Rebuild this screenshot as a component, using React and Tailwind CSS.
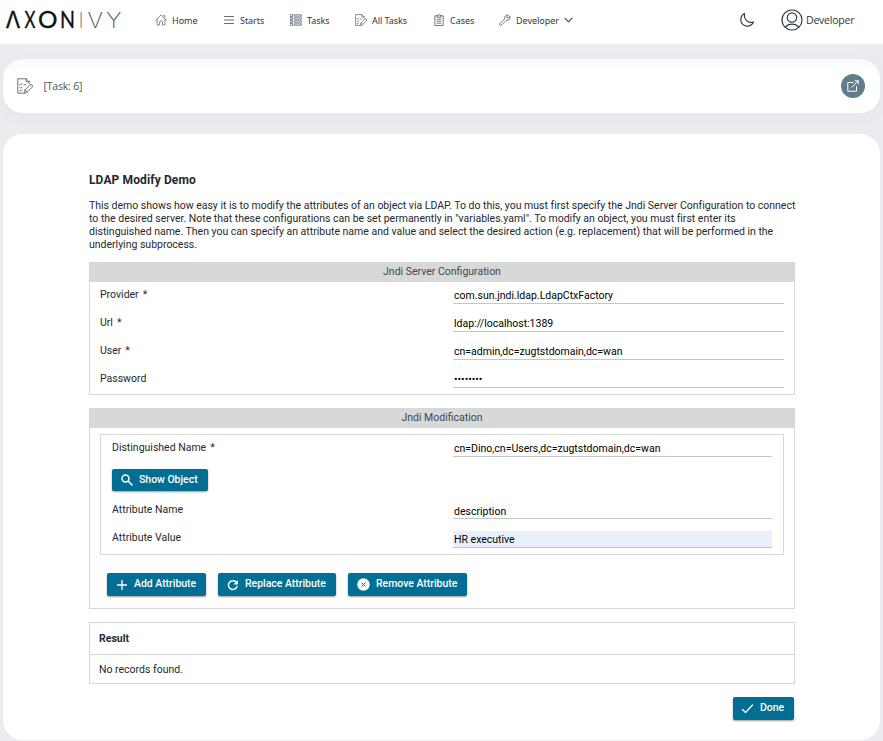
const stroke = { fill: 'none', stroke: 'currentColor', strokeLinecap: 'round', strokeLinejoin: 'round' };

function Logo() {
  return (
    <svg className="block h-[44px] w-[130px] shrink-0" viewBox="0 0 130 44" fill="#111" fontFamily="Lato, 'Open Sans', sans-serif" fontSize="22.4">
      <g stroke="#111" strokeWidth="0.3">
        <text x="5.500" y="28" textLength="15" lengthAdjust="spacingAndGlyphs" fontFamily="Inter, sans-serif">Λ</text>
        <text x="24.5" y="28" textLength="11" lengthAdjust="spacingAndGlyphs">X</text>
        <text x="38" y="28" textLength="19.500" lengthAdjust="spacingAndGlyphs">O</text>
        <text x="60" y="28" textLength="15" lengthAdjust="spacingAndGlyphs">N</text>
      </g>
      <g fontFamily="Inter, sans-serif" fontWeight="200" fontSize="22" fill="#555">
        <text x="78.300" y="28" fill="#777">I</text>
        <text x="87.500" y="28" textLength="15.500" lengthAdjust="spacingAndGlyphs">V</text>
        <text x="106" y="28" textLength="15.500" lengthAdjust="spacingAndGlyphs">Y</text>
      </g>
    </svg>
  );
}

function HomeIcon() {
  return (
    <svg className="size-[12px]" viewBox="0 0 12 12" strokeWidth="0.7" {...stroke}>
      <path d="M.6 6.300 6 .9l5.400 5.400M2.100 5.300v5.700h2.500V8.300a1.400 1.400 0 0 1 2.800 0V11h2.500V5.300M8.500 1.600h1.400v1.600" />
    </svg>
  );
}
function MenuIcon() {
  return (
    <svg className="size-[12px]" viewBox="0 0 12 12" strokeWidth="0.9" {...stroke}>
      <path d="M1.500 2.500h9M1.500 6h9M1.500 9.500h9" />
    </svg>
  );
}
function ListIcon() {
  return (
    <svg className="size-[12px]" viewBox="0 0 12 12" strokeWidth="0.7" {...stroke}>
      <path d="M.5.5h2v2h-2zM.5 3.500h2v2h-2zM.5 6.500h2v2h-2zM.5 9.500h2v2h-2zM4.500.8h7v1.400h-7zM4.500 3.800h7v1.400h-7zM4.500 6.800h7v1.400h-7zM4.500 9.800h7v1.400h-7z" />
    </svg>
  );
}
function TaskIcon({ className }) {
  return (
    <svg className={className} viewBox="0 0 16 16" strokeWidth="0.900" {...stroke}>
      <path d="M6.500 15.200H.8V.8h8.400l3 3v2M9.200.8v3h3M2.800 6.200l.8.8 1.300-1.600M2.800 9.500l.8.8 1.300-1.600M2.800 12.600l.8.8 1.300-1.600M7 6.700h1.500" />
      <path d="m7.200 15 .8-3 5-4.800a1.300 1.300 0 0 1 2.200 2L10.200 14zM8 12l2.200 2" />
    </svg>
  );
}
function ClipboardIcon() {
  return (
    <svg className="size-[12px]" viewBox="0 0 12 12" strokeWidth="0.8" {...stroke}>
      <path d="M4 1.800H1.800v9.700h8.400V1.800H8M4 2.800V1.500h1a1 1 0 0 1 2 0h1v1.300zM4 5.200h4M4 7.200h4M4 9.200h4" />
    </svg>
  );
}
function WrenchIcon() {
  return (
    <svg className="size-[12px]" viewBox="0 0 12 12" strokeWidth="0.8" {...stroke}>
      <path d="M10.900 2.400 9.200 4 7.900 3.900 7.800 2.700 9.400 1A3 3 0 0 0 5.800 4.900L.9 9.500a1.100 1.100 0 0 0 1.600 1.600L7.200 6.300a3 3 0 0 0 3.700-3.900z" />
    </svg>
  );
}

function NavItem({ icon, label, className }) {
  return (
    <a className={`flex h-full items-center text-[#4f5b66] ${className}`}>
      {icon}
      <span className="ml-[5px] mt-[1px] whitespace-nowrap tracking-[-0.04px] text-[#30363d]">{label}</span>
    </a>
  );
}

function Row({ label, value, required = false, inputClass = 'mt-[5px]', valueClass = 'w-[331px]', labelWidth = 'w-[353px]' }) {
  return (
    <div className="flex h-[28px] items-start">
      <label className={`mt-[6px] leading-[14px] ${labelWidth}`}>
        {label}
        {required && <span className="ml-[4px]">*</span>}
      </label>
      <div className={`h-[17px] border-b border-[#c6c6c6] pl-px leading-[17px] text-black ${valueClass} ${inputClass}`}>{value}</div>
    </div>
  );
}

function Button({ icon, label, className, labelClass = '-mt-[2px]' }) {
  return (
    <button className={`flex items-center rounded-[2px] bg-[#006f93] font-medium text-white shadow-[0_1px_2px_rgba(0,0,0,0.4)] ${className}`}>
      {icon}
      <span className={`ml-[6px] whitespace-nowrap tracking-[-0.03px] ${labelClass}`}>{label}</span>
    </button>
  );
}

function Panel({ title, children, className }) {
  return (
    <section className={`border border-t-0 border-[#d7d9d8] ${className}`}>
      <h2 className="-mx-px h-[20px] bg-[#d7d9d8] text-center leading-[19px] text-[#40474d]">{title}</h2>
      {children}
    </section>
  );
}

export default function App() {
  return (
    <div className="flex h-[741px] w-[883px] flex-col overflow-hidden bg-[#eaecf0] font-[Roboto,sans-serif] text-[10.500px] text-[#24292e]">
      <header className="flex h-[44px] shrink-0 items-center bg-white pb-[4px] font-['Noto_Sans',sans-serif] text-[9px]">
        <div className="mt-[4px]"><Logo /></div>
        <nav className="flex h-full items-center">
          <NavItem className="ml-[25px] w-[68px]" icon={<HomeIcon />} label="Home" />
          <NavItem className="w-[67px]" icon={<MenuIcon />} label="Starts" />
          <NavItem className="w-[65px]" icon={<ListIcon />} label="Tasks" />
          <NavItem className="w-[78px]" icon={<TaskIcon className="size-[12px]" />} label="All Tasks" />
          <NavItem className="w-[66px]" icon={<ClipboardIcon />} label="Cases" />
          <NavItem className="w-[65px]" icon={<WrenchIcon />} label="Developer" />
          <svg className="h-[6px] w-[9px]" viewBox="0 0 10 6" strokeWidth="1.200" color="#3b444c" {...stroke}><path d="m1 1 4 4 4-4" /></svg>
        </nav>
        <svg className="ml-[166px] size-[16px]" viewBox="0 0 16 16" strokeWidth="1.1" color="#2f3c48" {...stroke}>
          <path d="M5.500 1.600A6.600 6.600 0 1 0 14.500 10 C10.500 11.500 4.500 8.500 5.500 1.600z" />
        </svg>
        <svg className="ml-[26px] size-[22px]" viewBox="0 0 22 22" strokeWidth="1.200" color="#2f3c48" {...stroke}>
          <circle cx="11" cy="11" r="10" /><circle cx="11" cy="8.500" r="4.700" /><path d="M4.300 18.300c3-4.300 10.400-4.300 13.400 0" />
        </svg>
        <span className="ml-[3px] mt-[2px] font-['Open_Sans',sans-serif] text-[10.500px] tracking-[-0.22px] text-[#30363d]">Developer</span>
      </header>

      <div className="mx-[3px] mt-[15px] flex h-[54px] shrink-0 items-center rounded-[20px] bg-linear-to-b from-[#fafafb] to-white to-30% pl-[14px] pr-[15px] shadow-[0_4px_16px_rgba(90,110,130,0.04)]">
        <TaskIcon className="size-[16px] text-[#5d6670]" />
        <span className="ml-[10.500px] mt-[2px] font-['Open_Sans',sans-serif] text-[10.500px] tracking-[-0.2px] text-[#4a5560]">[Task: 6]</span>
        <div className="ml-auto flex size-[24px] items-center justify-center rounded-full bg-[#607d8b] text-white">
          <svg className="size-[12px]" viewBox="0 0 12 12" strokeWidth="1" {...stroke}><path d="M6 2.500H.8v8.700h8.700V6.500M8 .8h3.200V4M11.200.8 4.800 7.200" /></svg>
        </div>
      </div>

      <main className="mx-[3px] mt-[21px] h-[606px] shrink-0 rounded-[20px] bg-white px-[86px] pt-[38px]">
        <h1 className="h-[27px] text-[12px] font-bold leading-[16px] tracking-[0.12px]">LDAP Modify Demo</h1>
        <p className="h-[63px] whitespace-nowrap leading-[13px] tracking-[-0.005px]">
          This demo shows how easy it is to modify the attributes of an object via LDAP. To do this, you must first specify the Jndi Server Configuration to connect<br />
          to the desired server. Note that these configurations can be set permanently in "variables.yaml". To modify an object, you must first enter its<br />
          distinguished name. Then you can specify an attribute name and value and select the desired action (e.g. replacement) that will be performed in the<br />
          underlying subprocess.
        </p>

        <Panel title="Jndi Server Configuration" className="h-[133px] w-[706px]">
          <div className="pl-[10px]">
            <Row label="Provider" required value="com.sun.jndi.ldap.LdapCtxFactory" />
            <Row label="Url" required value="ldap://localhost:1389" />
            <Row label="User" required value="cn=admin,dc=zugtstdomain,dc=wan" />
            <Row label="Password" value="••••••••" />
          </div>
        </Panel>

        <Panel title="Jndi Modification" className="mt-[13px] h-[201px] w-[706px]">
          <div className="ml-[10px] mt-[6px] h-[121px] w-[684px] border border-[#d7d9d8] pl-[11px]">
            <Row label="Distinguished Name" required value="cn=Dino,cn=Users,dc=zugtstdomain,dc=wan" labelWidth="w-[341px]" valueClass="w-[319px]" />
            <div className="h-[34px] pt-[6px]">
              <Button className="h-[22px] w-[96px] pl-[9px]" labelClass="-mt-px" label="Show Object" icon={
                <svg className="size-[12px]" viewBox="0 0 12 12" strokeWidth="1.500" {...stroke}><circle cx="4.500" cy="4.500" r="3.500" /><path d="m7.300 7.300 3.700 3.700" /></svg>
              } />
            </div>
            <Row label="Attribute Name" value="description" labelWidth="w-[341px]" valueClass="w-[319px]" inputClass="mt-[5px] pt-px" />
            <Row label="Attribute Value" value="HR executive" labelWidth="w-[341px]" valueClass="w-[319px]" inputClass="mt-[6px] bg-[#e8f0fe]" />
          </div>
          <div className="mt-[18px] flex gap-[12px] pl-[17px]">
            <Button className="h-[23px] w-[99px] pl-[9px]" label="Add Attribute" icon={
              <svg className="size-[12px]" viewBox="0 0 12 12" strokeWidth="1.300" {...stroke}><path d="M6 1.500v9M1.500 6h9" /></svg>
            } />
            <Button className="h-[23px] w-[118px] pl-[9px]" label="Replace Attribute" icon={
              <svg className="size-[12px]" viewBox="0 0 12 12" strokeWidth="1.500" {...stroke}><path d="M10 7.500A4.400 4.400 0 1 1 8.800 2.800L10 4" /><path d="M10.800 1v4.500H6.300z" fill="currentColor" stroke="none" /></svg>
            } />
            <Button className="h-[23px] w-[119px] pl-[9px]" label="Remove Attribute" icon={
              <svg className="size-[13px]" viewBox="0 0 13 13"><circle cx="6.500" cy="6.500" r="6.200" fill="#fff" /><path d="m4.500 4.500 4 4m0-4-4 4" stroke="#006f93" strokeWidth="1" /></svg>
            } />
          </div>
        </Panel>

        <div className="mt-[13px] h-[62px] w-[706px] border border-[#d7d9d8]">
          <div className="h-[32px] border-b border-[#d7d9d8] pl-[9px] font-bold leading-[31px]">Result</div>
          <div className="pl-[9px] leading-[29px]">No records found.</div>
        </div>
        <div className="mt-[13px] flex w-[705px] justify-end">
          <Button className="h-[23px] w-[61px] pl-[8px]" label="Done" icon={
            <svg className="size-[13px]" viewBox="0 0 13 13" strokeWidth="1.300" {...stroke}><path d="m1.500 7.500 3 3 7-7.500" /></svg>
          } />
        </div>
      </main>
    </div>
  );
}
